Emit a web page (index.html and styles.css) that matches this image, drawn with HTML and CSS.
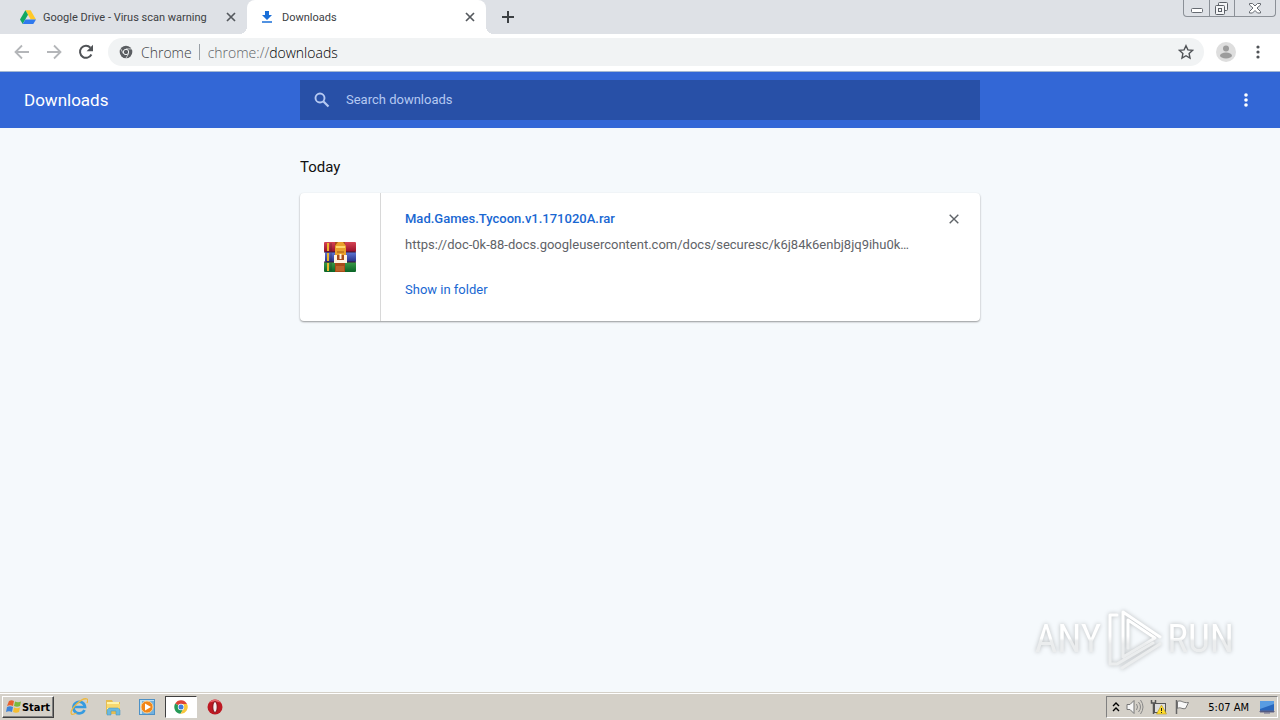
FILE: index.html
```html
<!DOCTYPE html>
<html lang="en">
<head>
    <meta charset="UTF-8">
    <meta name="viewport" content="width=device-width, initial-scale=1.0">
    <title>Downloads</title>
    <link rel="stylesheet" href="styles.css">
</head>
<body>
    <div class="tab-strip">
        <div class="tab">
            <svg class="tab-icon" viewBox="0 0 16 16">
                <path d="M5.4 1.2h5.2L16 10.4h-5.3z" fill="#ffc928"/>
                <path d="M5.4 1.2L8 5.8 2.7 15 0 10.4z" fill="#11a861"/>
                <path d="M5.4 10.4H16L13.3 15H2.7z" fill="#2f79ee"/>
            </svg>
            <span class="tab-title">Google Drive - Virus scan warning</span>
            <button class="tab-close" aria-label="Close tab">
                <svg width="10" height="10" viewBox="0 0 10 10"><path d="M1 1l8 8M9 1L1 9" stroke="#55595e" stroke-width="1.7"/></svg>
            </button>
        </div>
        <div class="tab active">
            <svg class="tab-icon" viewBox="0 0 16 16">
                <path d="M6 2h4v4h3L8 11 3 6h3zM3 12.3h10v1.5H3z" fill="#1a6fd8"/>
            </svg>
            <span class="tab-title">Downloads</span>
            <button class="tab-close" aria-label="Close tab">
                <svg width="10" height="10" viewBox="0 0 10 10"><path d="M1 1l8 8M9 1L1 9" stroke="#55595e" stroke-width="1.7"/></svg>
            </button>
        </div>
        <button class="new-tab" aria-label="New tab">
            <svg width="12" height="12" viewBox="0 0 12 12"><path d="M6 0v12M0 6h12" stroke="#3c4043" stroke-width="2"/></svg>
        </button>
        <div class="window-buttons">
            <button class="window-button" aria-label="Minimize">
                <svg width="24" height="16" viewBox="0 0 24 16"><rect x="6.500" y="8.500" width="11" height="4" rx="1" fill="#fff" stroke="#666b72"/></svg>
            </button>
            <button class="window-button" aria-label="Restore">
                <svg width="24" height="16" viewBox="0 0 24 16" fill="#f4f5f7" stroke="#5b6067"><rect x="8.500" y="2.500" width="9" height="8" rx="1"/><rect x="5.500" y="5.500" width="9" height="9" rx="1"/><rect x="8.500" y="8.500" width="3" height="3"/></svg>
            </button>
            <button class="window-button wide" aria-label="Close">
                <svg width="24" height="16" viewBox="0 0 24 16"><path d="M6.500 3.500h3l2.500 2.500 2.500-2.500h3v1.500L14 8l3.500 3.500v1.500h-3L12 10.500 9.500 13h-3v-1.500L10 8 6.500 5z" fill="#fff" stroke="#666b72"/></svg>
            </button>
        </div>
    </div>

    <div class="toolbar">
        <button class="nav-button" aria-label="Back">
            <svg width="16" height="16" viewBox="0 0 16 16"><path d="M15 8H2M8 1.500L1.500 8 8 14.500" fill="none" stroke="#b4b6b9" stroke-width="1.8"/></svg>
        </button>
        <button class="nav-button" aria-label="Forward">
            <svg width="16" height="16" viewBox="0 0 16 16"><path d="M1 8h13M8 1.500L14.500 8 8 14.500" fill="none" stroke="#b4b6b9" stroke-width="1.8"/></svg>
        </button>
        <button class="nav-button" aria-label="Reload">
            <svg width="16" height="16" viewBox="0 0 16 16"><path d="M13.400 10.500A6 6 0 1 1 12.400 3.700" fill="none" stroke="#505357" stroke-width="2"/><path d="M15 .8v6.400H8.600z" fill="#505357"/></svg>
        </button>
        <div class="omnibox">
            <svg width="14" height="14" viewBox="0 0 14 14">
                <circle cx="7" cy="7" r="6.300" fill="#5b5e62"/>
                <circle cx="7" cy="7" r="2.700" fill="#5b5e62" stroke="#f1f3f4"/>
                <path d="M7 3.900h6M4.400 8.700L1.600 3.600M9.600 8.700L6.800 13.500" stroke="#f1f3f4" stroke-width=".7"/>
            </svg>
            <span class="site-name">Chrome</span>
            <span class="site-divider"></span>
            <span class="site-url">chrome://<span class="site-host">downloads</span></span>
            <button class="star-button" aria-label="Bookmark this page">
                <svg width="16" height="16" viewBox="0 0 16 16"><path d="M8 1.700l1.900 4.200 4.600.5-3.400 3.100.9 4.500-4-2.300L4 14l.9-4.500L1.500 6.400l4.600-.5z" fill="none" stroke="#505357" stroke-width="1.400"/></svg>
            </button>
        </div>
        <button class="profile-button" aria-label="Profile">
            <svg width="20" height="20" viewBox="0 0 20 20"><circle cx="10" cy="10" r="10" fill="#dedede"/><circle cx="10" cy="6.500" r="3" fill="#9c9c9c"/><ellipse cx="10" cy="13.500" rx="6" ry="3" fill="#9c9c9c"/></svg>
        </button>
        <button class="menu-button" aria-label="Menu">
            <svg width="4" height="14" viewBox="0 0 4 14" fill="#505357"><circle cx="2" cy="2" r="1.600"/><circle cx="2" cy="7" r="1.600"/><circle cx="2" cy="12" r="1.600"/></svg>
        </button>
    </div>

    <header class="page-header">
        <h1>Downloads</h1>
        <label class="search">
            <svg width="16" height="16" viewBox="0 0 16 16" fill="none" stroke="#b5c9f2"><circle cx="6" cy="6" r="4.500" stroke-width="1.900"/><path d="M9.500 9.500l5 5" stroke-width="2.200"/></svg>
            <input type="search" placeholder="Search downloads" aria-label="Search downloads">
        </label>
        <button class="more-button" aria-label="More actions">
            <svg width="4" height="14" viewBox="0 0 4 14" fill="#fff"><circle cx="2" cy="2" r="1.800"/><circle cx="2" cy="7" r="1.800"/><circle cx="2" cy="12" r="1.800"/></svg>
        </button>
    </header>

    <main class="content">
        <section class="downloads">
            <h2>Today</h2>
            <article class="card">
                <div class="file-icon">
                    <svg width="32" height="32" viewBox="0 0 32 32">
                        <defs>
                            <linearGradient id="red" x2="0" y2="1"><stop offset="0" stop-color="#d54454"/><stop offset="1" stop-color="#970d29"/></linearGradient>
                            <linearGradient id="blue" x2="0" y2="1"><stop offset="0" stop-color="#6079d6"/><stop offset="1" stop-color="#252d85"/></linearGradient>
                            <linearGradient id="green" x2="0" y2="1"><stop offset="0" stop-color="#3c9c48"/><stop offset="1" stop-color="#0a6426"/></linearGradient>
                        </defs>
                        <rect y="1" width="32" height="10" rx="1" fill="url(#red)"/>
                        <rect x="1" y="11" width="31" height="10" rx="1" fill="url(#blue)"/>
                        <rect y="21" width="32" height="10" rx="1" fill="url(#green)"/>
                        <path d="M0 11h32M0 21h32" stroke="#3a1637"/>
                        <path d="M4 2v8M4 12v8M4 22v8" stroke="#ebb62d" stroke-width="2"/>
                        <path d="M7 2v8M7 12v8M7 22v8" stroke="#1a1a26" opacity=".4"/>
                        <rect x="11" y="1" width="10" height="30" fill="#a94b18"/>
                        <path d="M11 14V5l3-4h5l3 4v9z" fill="#e9a12b"/>
                        <path d="M12 6h9" stroke="#ffd66b" stroke-width="2"/>
                        <path d="M13 11h7" stroke="#a65711"/>
                        <path d="M10 14h3v5h7v-5h3v8H10z" fill="#fff3df"/>
                        <path d="M16.500 13v5" stroke="#fff3df" stroke-width="2"/>
                        <rect x="12" y="25" width="8" height="5" fill="#bd642a"/>
                    </svg>
                </div>
                <div class="file-info">
                    <div class="file-heading">
                        <a class="file-name" href="#">Mad.Games.Tycoon.v1.171020A.rar</a>
                        <button class="remove-button" aria-label="Remove from list">
                            <svg width="10" height="10" viewBox="0 0 10 10"><path d="M.7.700l8.600 8.600M9.300.700L.7 9.300" stroke="#5f6368" stroke-width="1.400"/></svg>
                        </button>
                    </div>
                    <a class="file-url" href="#">https://doc-0k-88-docs.googleusercontent.com/docs/securesc/k6j84k6enbj8jq9ihu0k…</a>
                    <a class="show-link" href="#">Show in folder</a>
                </div>
            </article>
        </section>
    </main>

    <div class="watermark">
        <span>ANY</span>
        <svg width="58" height="66" viewBox="0 0 58 66" fill="none" stroke-linejoin="round" stroke-linecap="round">
            <defs>
                <linearGradient id="mark" gradientUnits="userSpaceOnUse" x1="0" y1="30" x2="0" y2="38"><stop offset="0" stop-color="#fff"/><stop offset="1" stop-color="#ebedee"/></linearGradient>
            </defs>
            <path d="M12 9H5v49h7l36-21M18 51V6l37 25M18 51l32-19L23 14v28M17 62l38-24" stroke="url(#mark)" stroke-width="3"/>
        </svg>
        <span>RUN</span>
    </div>

    <footer class="taskbar">
        <button class="start-button">
            <svg width="16" height="16" viewBox="0 0 16 16">
                <path d="M3 2c2-1 3-1 5 0L7 7C5 6 3 6 1 7z" fill="#e8602c"/>
                <path d="M9 2.500c2 1 4 1 6 0L14 7c-2 1-4 1-6 0z" fill="#7ab93c"/>
                <path d="M1 8c2-1 4-1 6 0l-1 5c-2-1-4-1-6 0z" fill="#3f83d8"/>
                <path d="M8 8.500c2 1 4 1 6 0L13 13c-2 1-4 1-6 0z" fill="#f5bd2f"/>
            </svg>
            Start
        </button>
        <div class="quick-launch">
            <button class="app-button" aria-label="Internet Explorer">
                <svg width="18" height="18" viewBox="0 0 18 18" fill="none"><path d="M14.500 12A5.800 5.800 0 1 1 15 9H4" stroke="#369be0" stroke-width="2.700"/><path d="M1.500 16C-1 12 12-1 17 1c1 .5 1 2 0 4M1.500 16c1 1 3 0 5-1" stroke="#edb940" stroke-width="1.300"/></svg>
            </button>
            <button class="app-button" aria-label="Explorer">
                <svg width="18" height="18" viewBox="0 0 18 18"><path d="M2 2h6l1 2h7v12H2z" fill="#e7bd50"/><path d="M3 4h12v8H3z" fill="#fff4a9"/><path d="M3 6h13v4H3z" fill="#f8d86f"/><path d="M3 17v-5l2-2h9l2 2v5h-4v-4H7v4z" fill="#6bb9df" stroke="#4793b8" stroke-width=".5"/></svg>
            </button>
            <button class="app-button" aria-label="Media Player">
                <svg width="18" height="18" viewBox="0 0 18 18"><rect x="1.500" y="1.500" width="15" height="15" fill="#bde0f4" stroke="#4d91c6"/><rect x="4" y="3" width="12" height="13" fill="#71b1df"/><circle cx="9" cy="9" r="6" fill="#f18618" stroke="#ffd192"/><path d="M7 5.500l6 3.500-6 3.500z" fill="#fff"/></svg>
            </button>
            <button class="app-button running" aria-label="Chrome">
                <svg width="14" height="14" viewBox="0 0 14 14"><path d="M7 7L1.200 3.600A6.700 6.700 0 0 1 13 4H7z" fill="#dd4437"/><path d="M7 7l-5.800-3.400A6.700 6.700 0 0 0 6.500 13.700L10 8z" fill="#269a57"/><path d="M7 4h6a6.700 6.700 0 0 1-6.500 9.700L10 8z" fill="#f8c63b"/><circle cx="7" cy="7" r="3.200" fill="#fff"/><circle cx="7" cy="7" r="2.500" fill="#3f7ddd"/></svg>
            </button>
            <button class="app-button" aria-label="Opera">
                <svg width="18" height="18" viewBox="0 0 18 18"><circle cx="9" cy="9" r="7.500" fill="#bd1822"/><path d="M3 5a7 7 0 0 1 12 0C12 3 6 3 3 5z" fill="#e86a6e"/><ellipse cx="9" cy="9" rx="2.200" ry="5.500" fill="#f5eeee" stroke="#800d15"/></svg>
            </button>
        </div>
        <div class="tray">
            <svg width="8" height="12" viewBox="0 0 8 12" fill="none" stroke="#000" stroke-width="1.400"><path d="M1 5l3-3 3 3M1 10l3-3 3 3"/></svg>
            <svg width="18" height="16" viewBox="0 0 18 16"><path d="M1 5.500h3l4-4v13l-4-4H1z" fill="#f7f7f7" stroke="#777"/><path d="M10.500 5q2 3 0 6M12.500 3q4 5 0 10M14.500 1q5 7 0 14" fill="none" stroke="#888"/></svg>
            <svg width="18" height="16" viewBox="0 0 18 16"><rect x="4.500" y="4.500" width="11" height="9" fill="#ddd" stroke="#555"/><path d="M1.500 1v3h4V1M3.500 4v11" fill="none" stroke="#555" stroke-width="1.500"/><path d="M11.500 6l5 9h-10z" fill="#ffdc29" stroke="#b69722" stroke-width=".6"/><path d="M11.500 9v3M11.500 13v1" stroke="#222"/></svg>
            <svg width="18" height="16" viewBox="0 0 18 16"><path d="M3.500 2.500c4-2 5 2 11 1l-3 6c-4 1-5-2-8 0z" fill="#f8f8f8" stroke="#777"/><path d="M2.500 1v14" stroke="#666" stroke-width="1.500"/></svg>
            <span class="clock">5:07 AM</span>
            <svg width="16" height="14" viewBox="0 0 16 14"><path d="M1 1h14v10H1z" fill="#2867bd"/><path d="M1 1h14v3L1 9z" fill="#589ce2"/><path d="M1 11h14v1H1zM5 13h6" fill="#173b73" stroke="#668"/></svg>
        </div>
    </footer>
</body>
</html>
```
FILE: styles.css
```css
* {
    box-sizing: border-box;
}

body {
    margin: 0;
    min-height: 100vh;
    display: flex;
    flex-direction: column;
    background-color: #f5f9fc;
    font-family: Roboto, sans-serif;
    font-size: 13px;
}

button {
    display: flex;
    align-items: center;
    justify-content: center;
    padding: 0;
    border: none;
    background: none;
    cursor: pointer;
}

a {
    text-decoration: none;
}

svg {
    display: block;
    flex-shrink: 0;
}

/* Tabs */
.tab-strip {
    display: flex;
    height: 34px;
    padding-left: 8px;
    background-color: #dee1e6;
}

.tab {
    position: relative;
    display: flex;
    align-items: center;
    width: 239px;
    padding: 0 11px 0 12px;
    font-size: 11px;
    color: #3c4043;
}

.tab-icon {
    width: 16px;
    height: 16px;
    margin-right: 7px;
}

.tab-title {
    flex: 1;
    white-space: nowrap;
}

.tab.active {
    background-color: #fff;
    border-radius: 8px 8px 0 0;
}

.tab.active::before,
.tab.active::after {
    content: "";
    position: absolute;
    bottom: 0;
    width: 8px;
    height: 8px;
}

.tab.active::before {
    left: -8px;
    background: radial-gradient(circle at top left, transparent 8px, #fff 8px);
}

.tab.active::after {
    right: -8px;
    background: radial-gradient(circle at top right, transparent 8px, #fff 8px);
}

.new-tab {
    width: 44px;
}

.window-buttons {
    display: flex;
    height: 17px;
    margin: 0 4px 0 auto;
    border: 1px solid #8b9097;
    border-top: none;
    border-radius: 0 0 4px 4px;
}

.window-button {
    width: 25px;
}

.window-button + .window-button {
    border-left: 1px solid #8b9097;
}

.window-button.wide {
    width: 41px;
}

/* Address bar */
.toolbar {
    display: flex;
    align-items: center;
    height: 38px;
    padding: 0 10px 1px 6px;
    background-color: #fff;
    border-bottom: 1px solid #a5b9d2;
}

.nav-button {
    width: 32px;
    height: 32px;
}

.omnibox {
    flex: 1;
    display: flex;
    align-items: center;
    height: 28px;
    margin-left: 6px;
    padding: 0 10px 0 11px;
    border-radius: 14px;
    background-color: #f1f3f4;
    font-family: "Open Sans", sans-serif;
    font-size: 14px;
    font-weight: 300;
    color: #5f6368;
}

.site-name {
    margin-left: 8px;
    color: #3c4043;
}

.site-divider {
    width: 1px;
    height: 16px;
    margin: 0 8px 0 7px;
    background-color: #9aa0a6;
}

.site-host {
    color: #000;
}

.star-button {
    margin-left: auto;
}

.profile-button {
    margin-left: 12px;
}

.menu-button {
    width: 24px;
    height: 24px;
    margin-left: 10px;
}

/* Page header */
.page-header {
    display: grid;
    grid-template-columns: 1fr minmax(0, 680px) 1fr;
    align-items: center;
    height: 56px;
    padding: 0 24px;
    background-color: #3367d6;
    color: #fff;
}

.page-header h1 {
    margin: 0;
    font-size: 17px;
    font-weight: 400;
}

.search {
    display: flex;
    align-items: center;
    gap: 16px;
    height: 40px;
    padding: 0 14px;
    background-color: #2850a7;
}

.search input {
    flex: 1;
    height: 40px;
    padding: 0 0 2px;
    border: none;
    outline: none;
    background: none;
    font: inherit;
    color: #fff;
}

.search input::placeholder {
    color: #b5c9f2;
    opacity: 1;
}

.more-button {
    justify-self: end;
    width: 20px;
    height: 24px;
}

/* Download list */
.content {
    flex: 1;
    padding: 0 24px;
}

.downloads {
    max-width: 680px;
    margin: 0 auto;
}

.downloads h2 {
    margin: 0;
    padding: 30px 0 16px;
    font-size: 15px;
    line-height: 19px;
    font-weight: 400;
    color: #111;
}

.card {
    display: flex;
    min-height: 128px;
    border-radius: 4px;
    background-color: #fff;
    box-shadow: 0 1px 2px rgba(0, 0, 0, 0.4);
}

.file-icon {
    display: flex;
    align-items: center;
    justify-content: center;
    width: 81px;
    border-right: 1px solid #d8d8d8;
}

.file-info {
    flex: 1;
    display: flex;
    flex-direction: column;
    align-items: flex-start;
    min-width: 0;
    padding: 16px 20px 16px 24px;
    line-height: 20px;
}

.file-heading {
    display: flex;
    justify-content: space-between;
    align-self: stretch;
}

.file-name {
    font-weight: 500;
    color: #1967d2;
}

.remove-button {
    width: 12px;
    height: 20px;
}

.file-url {
    margin-top: 6px;
    color: #5f6368;
}

.show-link {
    margin-top: 25px;
    color: #1967d2;
}

.watermark {
    position: fixed;
    right: 46px;
    bottom: 48px;
    display: flex;
    align-items: center;
    gap: 4px;
    font-family: "Roboto Condensed", "Liberation Sans Narrow", sans-serif;
    font-size: 39px;
    filter: drop-shadow(0 0 2px #b9bcbe);
    pointer-events: none;
}

.watermark span {
    background: linear-gradient(#fff 48%, #ebedee 54%);
    background-clip: text;
    -webkit-background-clip: text;
    color: transparent;
}

/* Taskbar */
.taskbar {
    display: flex;
    align-items: center;
    height: 28px;
    padding: 1px 2px 0;
    border-top: 1px solid #d4d0c8;
    background-color: #d4d0c8;
    box-shadow: inset 0 1px #fff;
    font-family: "DejaVu Sans Condensed", sans-serif;
    font-size: 11px;
}

.start-button {
    width: 52px;
    height: 22px;
    border: 1px solid;
    border-color: #fff #404040 #404040 #fff;
    box-shadow: inset -1px -1px #808080;
    font: inherit;
    font-weight: 700;
    color: #000;
}

.quick-launch {
    display: flex;
    gap: 2px;
    margin-left: 9px;
}

.app-button {
    width: 32px;
    height: 22px;
}

.app-button.running {
    border: 1px solid;
    border-color: #404040 #fff #fff #404040;
    background-color: #fff;
}

.tray {
    display: flex;
    align-items: center;
    gap: 6px;
    height: 22px;
    margin-left: auto;
    padding: 0 2px 0 5px;
    border: 1px solid;
    border-color: #808080 #fff #fff #808080;
    color: #000;
}

.clock {
    margin: 0 4px 0 10px;
}
```
